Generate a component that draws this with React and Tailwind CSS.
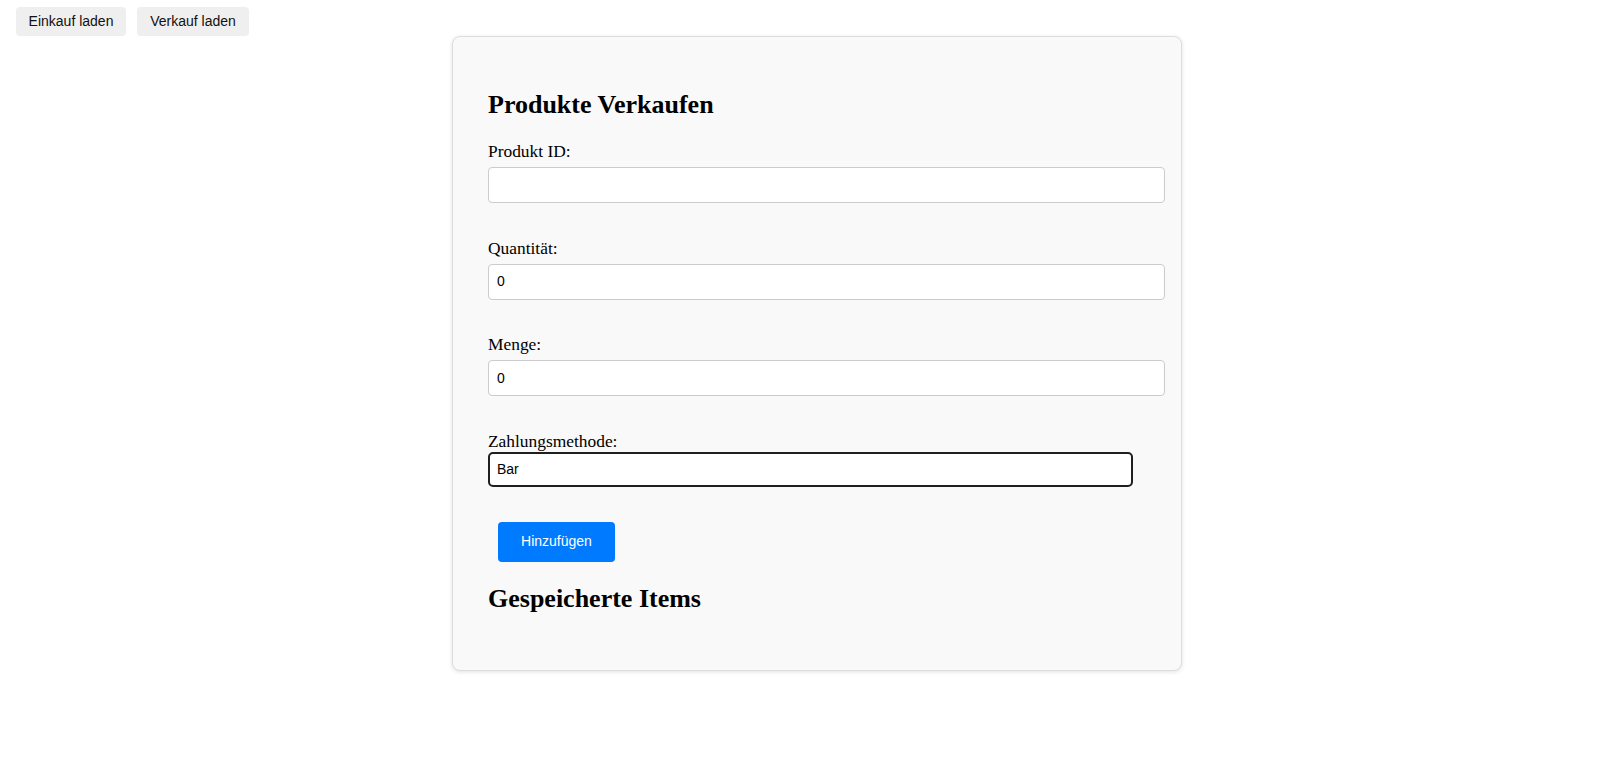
import React, { useState } from 'react';

const fields = [
  { id: 'produktId', label: 'Produkt ID:' },
  { id: 'quantitaet', label: 'Quantität:' },
  { id: 'menge', label: 'Menge:' },
];

export default function App() {
  const [values, setValues] = useState({ produktId: '', quantitaet: '0', menge: '0' });
  const [zahlung, setZahlung] = useState('Bar');
  const [items, setItems] = useState([]);

  const handleAdd = (e) => {
    e.preventDefault();
    setItems([...items, { ...values, zahlung }]);
  };

  return (
    <div className="min-h-screen bg-white text-black">
      {/* Obere Buttons */}
      <div className="flex gap-[11px] pl-4 pt-[7px] font-['Liberation_Sans',Arial,sans-serif]">
        <button className="w-[110px] h-[29px] bg-[#efefef] rounded-[4px] text-[14px] text-[#111]">
          Einkauf laden
        </button>
        <button className="w-[112px] h-[29px] bg-[#efefef] rounded-[4px] text-[14px] text-[#111]">
          Verkauf laden
        </button>
      </div>

      {/* Formular-Karte */}
      <div className="ml-[452px] w-[730px] bg-[#f9f9f9] border border-[#dddddd] rounded-[8px] shadow-[0_1px_4px_rgba(0,0,0,0.12)] p-[35px] font-['Liberation_Serif','Times_New_Roman',serif]">
        <h2 className="mt-[18px] mb-[22px] text-[26px] leading-[30px] font-bold">Produkte Verkaufen</h2>

        <form onSubmit={handleAdd}>
          {fields.map((f) => (
            <div key={f.id} className="mb-[35.5px]">
              <label htmlFor={f.id} className="block text-[17.4px] leading-[18px] mb-[7px]">
                {f.label}
              </label>
              <input
                id={f.id}
                type="text"
                value={values[f.id]}
                onChange={(e) => setValues({ ...values, [f.id]: e.target.value })}
                className="block box-content w-[659px] h-[18px] py-[8px] px-[8px] bg-white border border-[#cccccc] rounded-[4px] text-[14px] font-['Liberation_Sans',Arial,sans-serif] outline-none"
              />
            </div>
          ))}

          <div className="mb-[35px]">
            <label htmlFor="zahlung" className="block text-[17.4px] leading-[18px] mb-[2px]">
              Zahlungsmethode:
            </label>
            <select
              id="zahlung"
              value={zahlung}
              onChange={(e) => setZahlung(e.target.value)}
              className="block w-[645px] h-[35px] px-[7px] bg-white border-2 border-[#1f1f1f] rounded-[5px] text-[14px] font-['Liberation_Sans',Arial,sans-serif] appearance-none outline-none"
            >
              <option>Bar</option>
              <option>Karte</option>
              <option>Überweisung</option>
            </select>
          </div>

          <button
            type="submit"
            className="ml-[10px] w-[117px] h-[40px] bg-[#007bff] text-white rounded-[4px] text-[14px] font-['Liberation_Sans',Arial,sans-serif]"
          >
            Hinzufügen
          </button>
        </form>

        <h2 className="mt-[22px] mb-[21px] text-[26px] leading-[30px] font-bold">Gespeicherte Items</h2>
        {items.length > 0 && (
          <ul className="text-[17px]">
            {items.map((it, i) => (
              <li key={i}>{`${it.produktId} – ${it.quantitaet} – ${it.menge} – ${it.zahlung}`}</li>
            ))}
          </ul>
        )}
      </div>
    </div>
  );
}
